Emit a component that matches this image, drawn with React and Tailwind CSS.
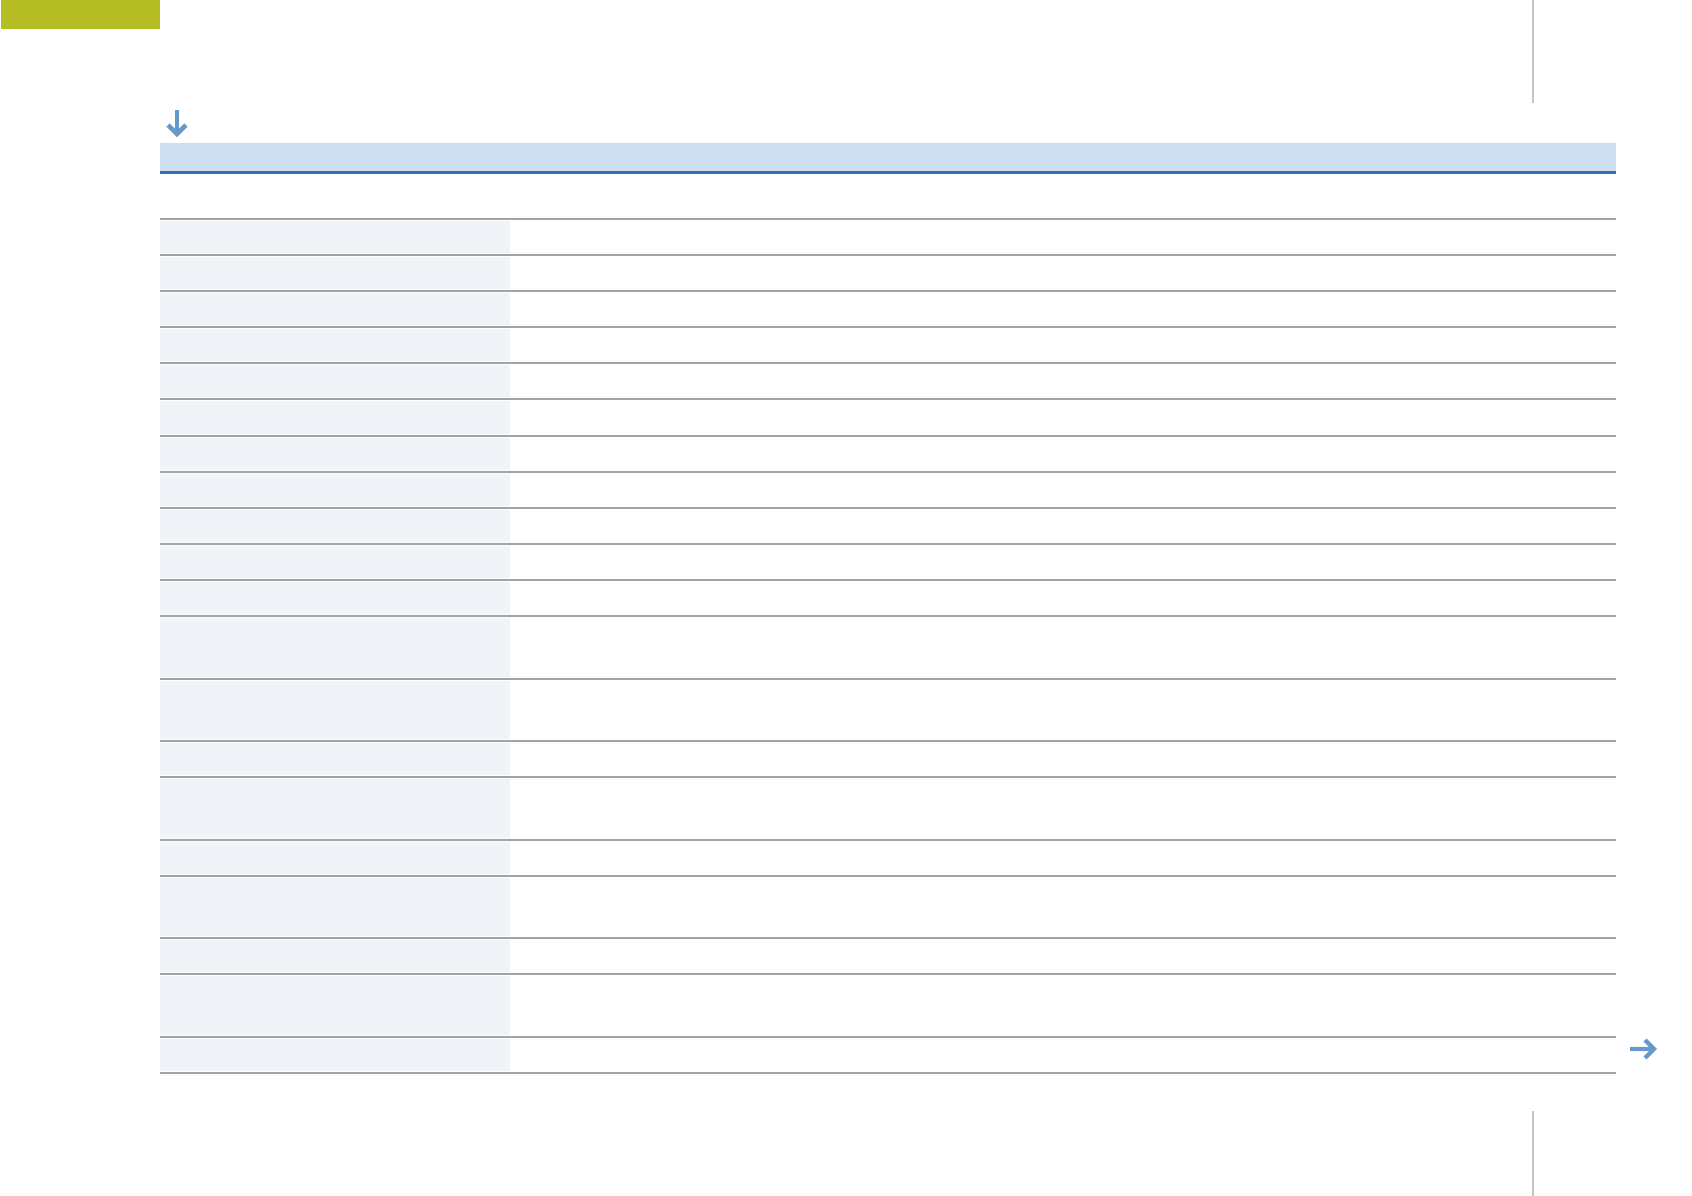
import React from "react";

// row heights: s = single line, d = double line
const rows = ["s", "s", "s", "s", "s", "s", "s", "s", "s", "s", "s", "d", "d", "s", "d", "s", "d", "s", "d", "s"];

const DownArrow = () => (
  <svg width="22" height="28" viewBox="0 0 22 28" className="block">
    <path d="M11 0v24" stroke="#6699c9" strokeWidth="4" fill="none" />
    <path d="M2 15l9 9 9-9" stroke="#6699c9" strokeWidth="4.6" fill="none" />
  </svg>
);

const RightArrow = () => (
  <svg width="28" height="22" viewBox="0 0 28 22" className="block">
    <path d="M0 11h22" stroke="#6699c9" strokeWidth="4.2" fill="none" />
    <path d="M15 2l9 9-9 9" stroke="#6699c9" strokeWidth="4.4" fill="none" />
  </svg>
);

const App = () => {
  return (
    <div className="w-[1692px] h-[1196px] bg-white overflow-hidden font-['Liberation_Sans',sans-serif]">
      {/* top strip */}
      <div className="flex h-[103px]">
        <div className="ml-px w-[159px] h-[29px] bg-[#b4bd23]" />
        <div className="ml-auto mr-[158px] w-[2px] h-full bg-[#c2c4c7]" />
      </div>

      <div className="pl-[160px]">
        <div className="h-[40px] pt-[7px] pl-[6px]">
          <DownArrow />
        </div>

        <div className="relative w-[1456px]">
          {/* header band */}
          <div className="h-[28px] bg-[#cfdeee]" />
          <div className="h-[2.5px] bg-[#2c72b4]" />
          <div className="h-[44.5px]" />

          {rows.map((r, i) => (
            <div
              key={i}
              className={`border-t-2 border-[#a3a3a3] py-px ${r === "d" ? "h-[62.5px]" : "h-[36.1px]"}`}
            >
              <div className="w-[350px] h-full bg-[#f0f3f8]" />
            </div>
          ))}
          <div className="h-[2px] bg-[#a3a3a3]" />

          <div className="absolute -right-[42px] bottom-[14px]">
            <RightArrow />
          </div>
        </div>
      </div>

      {/* bottom strip */}
      <div className="flex mt-[37px] h-[85px]">
        <div className="ml-auto mr-[158px] w-[2px] h-full bg-[#c2c4c7]" />
      </div>
    </div>
  );
};

export default App;
